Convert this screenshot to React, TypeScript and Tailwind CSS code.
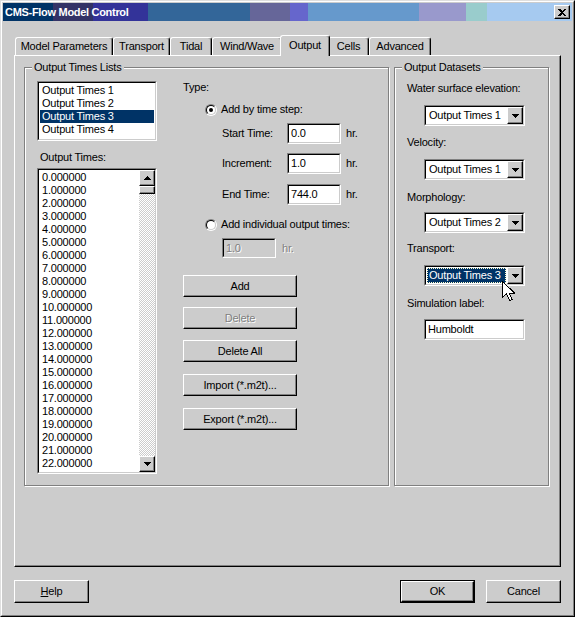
import type { ReactNode } from 'react'

const raised = 'border border-t-white border-l-white border-r-black border-b-black shadow-[inset_-1px_-1px_0_#808080]'

function Sunken({ className = '', innerClass = '', children }: { className?: string; innerClass?: string; children?: ReactNode }) {
  return (
    <div className={`border border-t-[#808080] border-l-[#808080] border-r-white border-b-white ${className}`}>
      <div className={`h-full border border-t-black border-l-black border-r-[#cccccc] border-b-[#cccccc] ${innerClass}`}>{children}</div>
    </div>
  )
}

function Arrow({ up }: { up?: boolean }) {
  return (
    <svg width="7" height="4" viewBox="0 0 7 4" shapeRendering="crispEdges">
      {up ? <polygon points="3.5,0 7,4 0,4" fill="#000" /> : <polygon points="0,0 7,0 3.5,4" fill="#000" />}
    </svg>
  )
}

function Button({ label, disabled, className = 'w-[114px] h-[22px]' }: { label: ReactNode; disabled?: boolean; className?: string }) {
  return (
    <div className={`flex items-center justify-center bg-[#cccccc] ${raised} ${className}`}>
      <span className={disabled ? 'text-[#808080] [text-shadow:1px_1px_0_#fff]' : ''}>{label}</span>
    </div>
  )
}

function Radio({ checked }: { checked?: boolean }) {
  return (
    <span className="flex w-[12px] h-[12px] rounded-full border border-t-[#808080] border-l-[#808080] border-r-white border-b-white">
      <span className="flex flex-1 items-center justify-center rounded-full bg-white border border-t-black border-l-black border-r-[#cccccc] border-b-[#cccccc]">
        {checked && <span className="w-[4px] h-[4px] rounded-full bg-black" />}
      </span>
    </span>
  )
}

function Combo({ value, focused }: { value: string; focused?: boolean }) {
  return (
    <Sunken className="w-[101px] h-[21px] ml-[17px]" innerClass="flex bg-white">
      <div className="flex flex-1 items-center p-[1px]">
        {focused ? (
          <div className="flex h-full flex-1 items-center pl-[1px] bg-[#003366] text-white border border-dotted border-[#ffffcc]">{value}</div>
        ) : (
          <div className="pl-[2px]">{value}</div>
        )}
      </div>
      <div className={`flex w-[16px] items-center justify-center bg-[#cccccc] ${raised}`}>
        <Arrow />
      </div>
    </Sunken>
  )
}

function TimeRow({ label, value, className }: { label: string; value: string; className: string }) {
  return (
    <div className={`flex h-[21px] items-center ml-[39px] ${className}`}>
      <span className="w-[65px]">{label}</span>
      <Sunken className="w-[54px] h-[21px]" innerClass="flex items-center pl-[2px] bg-white">{value}</Sunken>
      <span className="ml-[5px]">hr.</span>
    </div>
  )
}

const tabs = [
  { label: 'Model Parameters', w: 'w-[98px]' },
  { label: 'Transport', w: 'w-[57px]' },
  { label: 'Tidal', w: 'w-[42px]' },
  { label: 'Wind/Wave', w: 'w-[70px]' },
  { label: 'Output', w: 'w-[50px]', active: true },
  { label: 'Cells', w: 'w-[41px]' },
  { label: 'Advanced', w: 'w-[62px]' },
]

const lists = ['Output Times 1', 'Output Times 2', 'Output Times 3', 'Output Times 4']
const times = Array.from({ length: 24 }, (_, i) => `${i}.000000`)

export default function App() {
  return (
    <div className="w-[575px] h-[617px] overflow-hidden bg-[#cccccc] text-black text-[11px] leading-[13px] tracking-[-0.2px] font-['Liberation_Sans',Arial,sans-serif] border border-t-[#dfdfdf] border-l-[#dfdfdf] border-r-black border-b-black">
      <div className="h-full border border-t-white border-l-white border-r-[#808080] border-b-[#808080] p-[1px]">
        {/* title bar */}
        <div className="flex h-[18px] items-center pl-[2px] pr-[2px] bg-[linear-gradient(to_right,#003366_0px,#003366_50px,#333366_50px,#333366_90px,#333399_90px,#333399_145px,#336699_145px,#336699_247px,#666699_247px,#666699_287px,#6666cc_287px,#6666cc_305px,#6699cc_305px,#6699cc_416px,#9999cc_416px,#9999cc_463px,#99cccc_463px,#99cccc_484px,#a6caf0_484px,#a6caf0_100%)]">
          <span className="flex-1 font-bold text-white tracking-[-0.3px]">CMS-Flow Model Control</span>
          <div className={`flex w-[16px] h-[14px] items-center justify-center bg-[#cccccc] ${raised}`}>
            <svg width="8" height="7" viewBox="0 0 8 7" shapeRendering="crispEdges">
              <path d="M0 0h2l2 2 2-2h2L5 3.5 8 7H6L4 5 2 7H0l3-3.5z" fill="#000" />
            </svg>
          </div>
        </div>

        {/* tabs */}
        <div className="flex h-[20px] items-end ml-[12px] mt-[14px]">
          {tabs.map((t) =>
            t.active ? (
              <div key={t.label} className={`relative z-10 -mx-[2px] -mb-[1px] flex h-[21px] items-start justify-center pt-[3px] bg-[#cccccc] rounded-t-[3px] border-t border-l border-r border-t-white border-l-white border-r-black shadow-[inset_-1px_0_0_#808080] ${t.w}`}>
                {t.label}
              </div>
            ) : (
              <div key={t.label} className={`flex h-[18px] items-center justify-center rounded-t-[3px] border-t border-l border-r border-t-white border-l-white border-r-black shadow-[inset_-1px_0_0_#808080] ${t.w}`}>
                {t.label}
              </div>
            )
          )}
        </div>

        {/* tab panel */}
        <div className={`ml-[11px] flex w-[547px] h-[512px] gap-[5px] pl-[9px] pt-[5px] ${raised}`}>
          <fieldset className="w-[365px] h-[425px] border border-[#808080] shadow-[inset_1px_1px_0_#fff,1px_1px_0_#fff]">
            <legend className="ml-[7px] px-[2px] bg-[#cccccc] leading-[13px]">Output Times Lists</legend>
            <div className="flex pl-[12px]">
              <div className="flex w-[120px] flex-col">
                <Sunken className="mt-[7px] h-[60px]" innerClass="bg-white p-[1px]">
                  {lists.map((l, i) => (
                    <div key={l} className={`h-[13px] pl-[2px] ${i === 2 ? 'bg-[#003366] text-white' : ''}`}>{l}</div>
                  ))}
                </Sunken>
                <div className="mt-[10px] ml-[3px]">Output Times:</div>
                <Sunken className="mt-[4px] h-[306px]" innerClass="flex bg-white overflow-hidden">
                  <div className="flex-1 overflow-hidden pt-[1px] pl-[3px]">
                    {times.map((t) => (
                      <div key={t} className="h-[13px]">{t}</div>
                    ))}
                  </div>
                  <div className="flex w-[16px] flex-col">
                    <div className={`flex h-[16px] items-center justify-center bg-[#cccccc] ${raised}`}>
                      <Arrow up />
                    </div>
                    <div className={`h-[8px] bg-[#cccccc] ${raised}`} />
                    <div className="flex-1 bg-[repeating-conic-gradient(#ffffff_0_25%,#cccccc_0_50%)] bg-[length:2px_2px]" />
                    <div className={`flex h-[16px] items-center justify-center bg-[#cccccc] ${raised}`}>
                      <Arrow />
                    </div>
                  </div>
                </Sunken>
              </div>

              <div className="ml-[26px] flex flex-col">
                <div className="mt-[7px]">Type:</div>
                <div className="mt-[9px] ml-[22px] flex h-[13px] items-center gap-[4px]">
                  <Radio checked />
                  <span>Add by time step:</span>
                </div>
                <TimeRow label="Start Time:" value="0.0" className="mt-[7px]" />
                <TimeRow label="Increment:" value="1.0" className="mt-[9px]" />
                <TimeRow label="End Time:" value="744.0" className="mt-[10px]" />
                <div className="mt-[13px] ml-[22px] flex h-[13px] items-center gap-[4px]">
                  <Radio />
                  <span>Add individual output times:</span>
                </div>
                <div className="mt-[7px] ml-[39px] flex h-[20px] items-center">
                  <Sunken className="w-[54px] h-[20px]" innerClass="flex items-center pl-[2px] bg-[#cccccc] text-[#808080] [text-shadow:1px_1px_0_#fff]">1.0</Sunken>
                  <span className="ml-[6px] text-[#808080] [text-shadow:1px_1px_0_#fff]">hr.</span>
                </div>
                <Button label="Add" className="mt-[17px] w-[114px] h-[22px]" />
                <Button label="Delete" disabled className="mt-[10px] w-[114px] h-[22px]" />
                <Button label="Delete All" className="mt-[11px] w-[114px] h-[22px]" />
                <Button label="Import (*.m2t)..." className="mt-[12px] w-[114px] h-[22px]" />
                <Button label="Export (*.m2t)..." className="mt-[12px] w-[114px] h-[22px]" />
              </div>
            </div>
          </fieldset>

          <fieldset className="w-[155px] h-[425px] border border-[#808080] shadow-[inset_1px_1px_0_#fff,1px_1px_0_#fff]">
            <legend className="ml-[7px] px-[2px] bg-[#cccccc] leading-[13px]">Output Datasets</legend>
            <div className="flex flex-col pl-[12px]">
              <div className="mt-[8px]">Water surface elevation:</div>
              <div className="mt-[10px]"><Combo value="Output Times 1" /></div>
              <div className="mt-[10px]">Velocity:</div>
              <div className="mt-[10px]"><Combo value="Output Times 1" /></div>
              <div className="mt-[11px]">Morphology:</div>
              <div className="mt-[8px]"><Combo value="Output Times 2" /></div>
              <div className="mt-[9px]">Transport:</div>
              <div className="relative mt-[10px]">
                <Combo value="Output Times 3" focused />
                <svg className="absolute left-[95px] top-[16px]" width="13" height="21" viewBox="0 0 13 21" shapeRendering="crispEdges">
                  <path d="M0.5 0.5v16l4-4 3 7 2.5-1-3-6.5h5.5z" fill="#fff" stroke="#000" strokeWidth="1" />
                </svg>
              </div>
              <div className="mt-[11px]">Simulation label:</div>
              <Sunken className="mt-[9px] ml-[17px] w-[101px] h-[21px]" innerClass="flex items-center pl-[2px] bg-white">Humboldt</Sunken>
            </div>
          </fieldset>
        </div>

        {/* bottom buttons */}
        <div className="mt-[13px] ml-[11px] flex w-[547px]">
          <Button label={<><span className="underline">H</span>elp</>} className="w-[75px] h-[23px]" />
          <div className="flex-1" />
          <div className="border border-black">
            <Button label="OK" className="w-[73px] h-[21px]" />
          </div>
          <Button label="Cancel" className="ml-[11px] w-[75px] h-[23px]" />
        </div>
      </div>
    </div>
  )
}
